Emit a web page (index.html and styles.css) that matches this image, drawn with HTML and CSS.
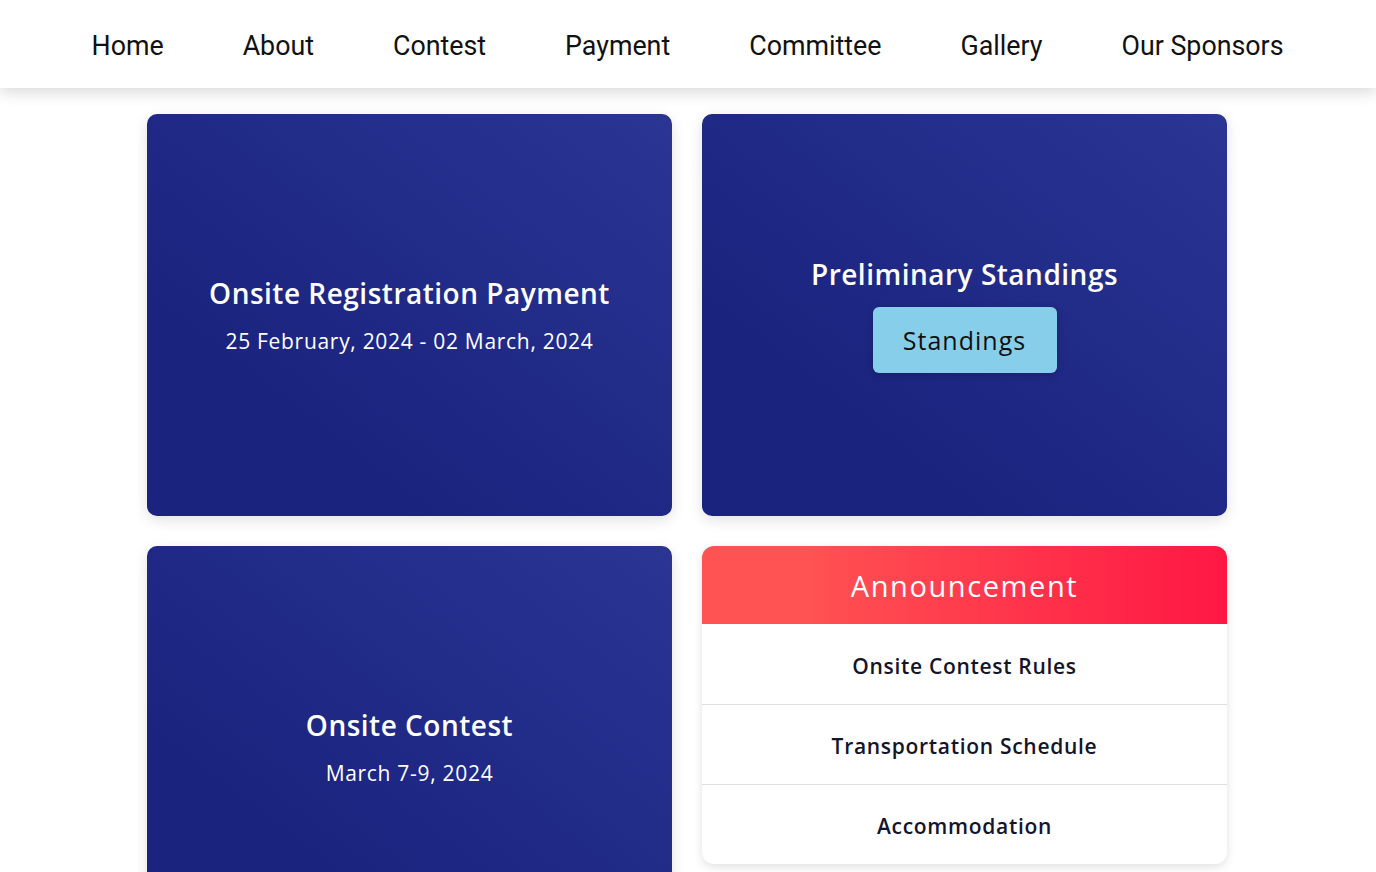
FILE: index.html
```html
<!DOCTYPE html>
<html lang="en">
<head>
<meta charset="utf-8">
<title>Contest</title>
<link rel="stylesheet" href="styles.css">
</head>
<body>
<header class="topnav">
  <ul class="navlist">
    <li><a href="#">Home</a></li>
    <li><a href="#">About</a></li>
    <li><a href="#">Contest</a></li>
    <li><a href="#">Payment</a></li>
    <li><a href="#">Committee</a></li>
    <li><a href="#">Gallery</a></li>
    <li><a href="#">Our Sponsors</a></li>
  </ul>
</header>
<main class="grid">
  <section class="card">
    <h2 class="card-title">Onsite Registration Payment</h2>
    <p class="card-date">25 February, 2024 - 02 March, 2024</p>
  </section>
  <section class="card">
    <h2 class="card-title">Preliminary Standings</h2>
    <a class="btn" href="#">Standings</a>
  </section>
  <section class="card">
    <h2 class="card-title">Onsite Contest</h2>
    <p class="card-date">March 7-9, 2024</p>
  </section>
  <section class="announce">
    <h2 class="announce-head">Announcement</h2>
    <ul class="announce-list">
      <li><a href="#">Onsite Contest Rules</a></li>
      <li><a href="#">Transportation Schedule</a></li>
      <li><a href="#">Accommodation</a></li>
    </ul>
  </section>
</main>
</body>
</html>
```
FILE: styles.css
```css
* { box-sizing: border-box; }
html, body { margin: 0; padding: 0; background: #fff; }
body { font-family: "Open Sans", "DejaVu Sans", sans-serif; }

.topnav {
  height: 88px;
  padding-top: 3px;
  background: #fff;
  box-shadow: 0 5px 14px rgba(0,0,0,0.14);
  display: flex;
  align-items: center;
  justify-content: center;
  position: relative;
  z-index: 2;
}
.navlist {
  list-style: none;
  margin: 0;
  padding: 0 1px 0 0;
  display: flex;
  gap: 79px;
}
.navlist a {
  font-family: Roboto, "Liberation Sans", sans-serif;
  font-size: 26.8px;
  color: #111;
  text-decoration: none;
  line-height: 30px;
}

.grid {
  width: 1080px;
  margin: 26px auto 0;
  display: grid;
  grid-template-columns: 525px 525px;
  column-gap: 30px;
  row-gap: 30px;
  transform: translateX(-1px);
}

.card {
  height: 402px;
  border-radius: 10px;
  background: linear-gradient(to top right, #1a237e 25%, #2a3594 100%);
  box-shadow: 0 4px 14px rgba(0,0,0,0.12);
  display: flex;
  flex-direction: column;
  align-items: center;
  justify-content: center;
  color: #fff;
  text-align: center;
}
.card-title {
  margin: 0;
  font-size: 28px;
  font-weight: 600;
  line-height: 34px;
  letter-spacing: 0.5px;
}
.card-date {
  margin: 18px 0 0;
  font-size: 21px;
  font-weight: 500;
  line-height: 26px;
  letter-spacing: 0.7px;
}
.btn {
  margin-top: 16px;
  width: 184px;
  height: 66px;
  display: flex;
  align-items: center;
  justify-content: center;
  background: #87ceeb;
  color: #111;
  border-radius: 6px;
  font-size: 25px;
  letter-spacing: 1px;
  text-decoration: none;
  box-shadow: 0 2px 8px rgba(0,0,0,0.18);
}

.announce {
  align-self: start;
  background: #fff;
  border-radius: 12px;
  overflow: hidden;
  box-shadow: 0 3px 10px rgba(0,0,0,0.12);
}
.announce-head {
  margin: 0;
  height: 78px;
  display: flex;
  align-items: center;
  justify-content: center;
  background: linear-gradient(to right, #ff5252 20%, #ff1744 100%);
  color: #fff;
  font-size: 29px;
  font-weight: 400;
  letter-spacing: 1.6px;
}
.announce-list {
  list-style: none;
  margin: 0;
  padding: 0;
}
.announce-list li {
  height: 80px;
  padding-top: 3px;
  display: flex;
  align-items: center;
  justify-content: center;
  border-top: 1px solid #e0e0e0;
}
.announce-list li:first-child { border-top: none; }
.announce-list a {
  font-size: 21px;
  font-weight: 600;
  letter-spacing: 0.7px;
  color: #14142b;
  text-decoration: none;
}
```
